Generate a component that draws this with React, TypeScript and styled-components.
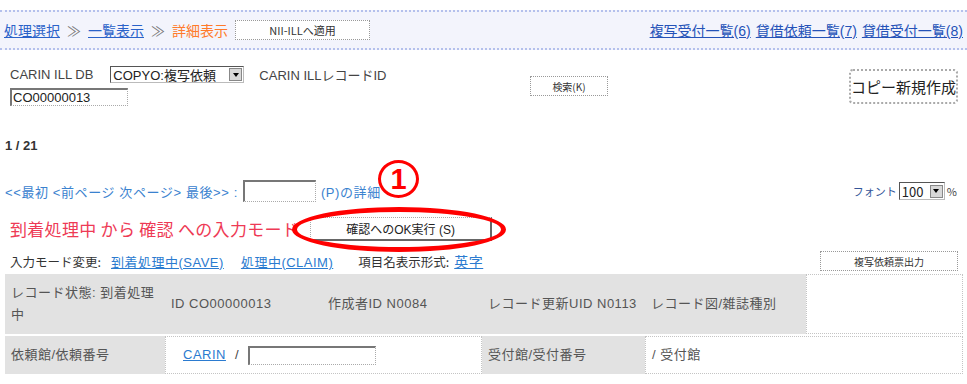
import React from 'react';
import styled, { createGlobalStyle } from 'styled-components';

const GlobalStyle = createGlobalStyle`
  body {
    margin: 0;
    background: #ffffff;
    font-family: "Liberation Sans", "Noto Sans CJK JP", sans-serif;
    color: #333;
  }
`;

const Page = styled.div`
  position: relative;
  width: 967px;
  height: 384px;
  overflow: hidden;
`;

const TopBar = styled.div`
  margin-top: 10px;
  height: 36px;
  display: flex;
  align-items: center;
  justify-content: space-between;
  padding: 0 4px;
  background: #f3f4fc;
  border-top: 2px dotted #b4c0ec;
  border-bottom: 2px dotted #b4c0ec;
  font-size: 14px;
  font-family: "Noto Sans CJK JP", sans-serif;
`;

const Crumbs = styled.div`
  display: flex;
  align-items: center;
`;

const Link = styled.a<{ $tone?: string }>`
  color: ${(p) => p.$tone || '#2a62c9'};
  text-decoration: underline;
  cursor: pointer;
`;

const Sep = styled.span`
  color: #777;
  margin: 0 7px;
`;

const Current = styled.span`
  color: #ff7a2a;
`;

const FlatButton = styled.button<{ $w: number; $h: number; $fs?: number }>`
  width: ${(p) => p.$w}px;
  height: ${(p) => p.$h}px;
  padding: 0;
  background: #fff;
  border: 1px dotted #999;
  font-family: "Noto Sans CJK JP", sans-serif;
  font-size: ${(p) => p.$fs || 11}px;
  color: #333;
`;

const ListLinks = styled.div`
  display: flex;
  gap: 5px;
  font-family: "Liberation Sans", "Noto Sans CJK JP", sans-serif;
`;

const SearchRow = styled.div`
  display: flex;
  align-items: flex-start;
  padding: 15px 9px 0 10px;
  height: 47px;
`;

const SearchLeft = styled.div`
  width: 520px;
  display: flex;
  flex-direction: column;
  gap: 4px;
`;

const Line = styled.div<{ $fs?: number }>`
  display: flex;
  align-items: center;
  font-size: ${(p) => p.$fs || 13}px;
  color: #444;
`;

const Select = styled.div<{ $w: number }>`
  display: inline-flex;
  align-items: center;
  justify-content: space-between;
  width: ${(p) => p.$w}px;
  height: 17px;
  border: 1px solid #555;
  border-right-color: #bbb;
  border-bottom-color: #bbb;
  font-size: 13px;
  color: #222;
  padding-left: 2px;
  box-sizing: border-box;
`;

const Arrow = styled.span`
  width: 13px;
  height: 13px;
  margin-right: 1px;
  background: #d8d8d8;
  border: 1px solid #888;
  box-sizing: border-box;
  display: flex;
  align-items: center;
  justify-content: center;
  &::after {
    content: '';
    border-left: 3px solid transparent;
    border-right: 3px solid transparent;
    border-top: 4px solid #000;
  }
`;

const TextInput = styled.div<{ $w: number; $h: number }>`
  width: ${(p) => p.$w}px;
  height: ${(p) => p.$h}px;
  border-top: 2px solid #777;
  border-left: 2px solid #777;
  border-right: 1px dotted #aaa;
  border-bottom: 1px dotted #aaa;
  font-size: 13px;
  line-height: ${(p) => p.$h - 3}px;
  box-sizing: border-box;
  padding-left: 1px;
  color: #222;
  background: #fff;
`;

const CopyButton = styled.button`
  margin-left: auto;
  margin-top: 4px;
  width: 109px;
  height: 35px;
  background: #fff;
  border: 2px dotted #aaa;
  border-radius: 4px;
  font-family: "Noto Sans CJK JP", sans-serif;
  font-size: 15px;
  color: #222;
  padding: 0;
`;

const Count = styled.div`
  margin: 26px 0 0 5px;
  font-size: 13px;
  font-weight: bold;
  color: #333;
`;

const NavRow = styled.div`
  margin-top: 27px;
  display: flex;
  align-items: center;
  justify-content: space-between;
  padding: 0 10px 0 5px;
  height: 22px;
  font-size: 13px;
`;

const NavText = styled.span`
  color: #3a82cf;
  letter-spacing: 0.6px;
`;

const NavLeft = styled.div`
  display: flex;
  align-items: center;
  gap: 5px;
`;

const FontPick = styled.div`
  display: flex;
  align-items: center;
  gap: 2px;
  color: #335599;
  font-size: 11px;
  font-family: "Noto Sans CJK JP", sans-serif;
`;

const ModeRow = styled.div`
  margin-top: 14px;
  display: flex;
  align-items: center;
  padding-left: 10px;
  height: 25px;
  gap: 11px;
`;

const ModeText = styled.span`
  color: #ee3a55;
  font-size: 17px;
  font-family: "Noto Sans CJK JP", sans-serif;
  letter-spacing: 0.3px;
`;

const OkButton = styled.button`
  width: 182px;
  height: 24px;
  background: #fff;
  border: 1px dotted #aaa;
  border-right: 2px solid #666;
  border-bottom: 2px solid #666;
  font-family: "Liberation Sans", "Noto Sans CJK JP", sans-serif;
  font-size: 12px;
  color: #222;
  padding: 0;
`;

const ChangeRow = styled.div`
  margin-top: 10px;
  display: flex;
  align-items: center;
  padding: 0 9px 0 10px;
  height: 20px;
  font-family: "Noto Sans CJK JP", sans-serif;
  font-size: 12.5px;
  color: #333;
`;

const WideLink = styled(Link)<{ $fs?: number }>`
  font-family: "Liberation Sans", "Noto Sans CJK JP", sans-serif;
  font-size: ${(p) => p.$fs || 13}px;
  letter-spacing: 0.5px;
`;

const Gap = styled.span<{ $w: number }>`
  display: inline-block;
  width: ${(p) => p.$w}px;
`;

const Table = styled.table`
  margin: 1px 0 0 5px;
  width: 958px;
  border-collapse: separate;
  border-spacing: 0 2px;
  table-layout: fixed;
  font-size: 13px;
  color: #555;
`;

const Cell = styled.td<{ $white?: boolean; $h: number }>`
  height: ${(p) => p.$h}px;
  padding: 0 6px;
  background: ${(p) => (p.$white ? '#fff' : '#e2e2e2')};
  border: ${(p) => (p.$white ? '1px dotted #c4c4c4' : 'none')};
  vertical-align: middle;
  line-height: 22px;
  letter-spacing: 0.5px;
`;

const CircleNum = styled.div`
  position: absolute;
  left: 378px;
  top: 160px;
  width: 35px;
  height: 32px;
  border: 3px solid #f00;
  border-radius: 50%;
  display: flex;
  align-items: center;
  justify-content: center;
  color: #f00;
  font-family: "Liberation Sans", sans-serif;
  font-weight: bold;
  font-size: 29px;
`;

const Ellipse = styled.div`
  position: absolute;
  left: 292px;
  top: 207px;
  width: 204px;
  height: 35px;
  border: 5px solid #f00;
  border-radius: 50%;
  pointer-events: none;
`;

export default function App() {
  return (
    <Page>
      <GlobalStyle />
      <TopBar>
        <Crumbs>
          <Link>処理選択</Link>
          <Sep>≫</Sep>
          <Link>一覧表示</Link>
          <Sep>≫</Sep>
          <Current>詳細表示</Current>
          <Gap $w={7} />
          <FlatButton $w={135} $h={20}>NII-ILLへ適用</FlatButton>
        </Crumbs>
        <ListLinks>
          <Link $tone="#2452b8">複写受付一覧(6)</Link>
          <Link $tone="#2452b8">貸借依頼一覧(7)</Link>
          <Link $tone="#2452b8">貸借受付一覧(8)</Link>
        </ListLinks>
      </TopBar>

      <SearchRow>
        <SearchLeft>
          <Line>
            CARIN ILL DB
            <Gap $w={17} />
            <Select $w={134}>
              COPYO:複写依頼
              <Arrow />
            </Select>
            <Gap $w={15} />
            CARIN ILLレコードID
          </Line>
          <TextInput $w={118} $h={18}>CO00000013</TextInput>
        </SearchLeft>
        <FlatButton $w={78} $h={20} $fs={10} style={{ marginTop: 11 }}>
          検索(K)
        </FlatButton>
        <CopyButton>コピー新規作成</CopyButton>
      </SearchRow>

      <Count>1 / 21</Count>

      <NavRow>
        <NavLeft>
          <NavText>&lt;&lt;最初 &lt;前ページ 次ページ&gt; 最後&gt;&gt; :</NavText>
          <TextInput $w={73} $h={22} />
          <NavText>(P)の詳細</NavText>
        </NavLeft>
        <FontPick>
          フォント
          <Select $w={46} style={{ height: 18 }}>
            100
            <Arrow />
          </Select>
          <span style={{ color: '#444' }}>%</span>
        </FontPick>
      </NavRow>

      <ModeRow>
        <ModeText>到着処理中 から 確認 への入力モード</ModeText>
        <OkButton>確認へのOK実行 (S)</OkButton>
      </ModeRow>

      <ChangeRow>
        入力モード変更:
        <Gap $w={10} />
        <WideLink $tone="#2b7bd0">到着処理中(SAVE)</WideLink>
        <Gap $w={17} />
        <WideLink $tone="#2b7bd0">処理中(CLAIM)</WideLink>
        <Gap $w={25} />
        項目名表示形式:
        <Gap $w={5} />
        <WideLink $tone="#2b7bd0" $fs={14}>英字</WideLink>
        <FlatButton $w={138} $h={20} $fs={10} style={{ marginLeft: 'auto' }}>
          複写依頼票出力
        </FlatButton>
      </ChangeRow>

      <Table>
        <colgroup>
          <col style={{ width: 160 }} />
          <col style={{ width: 157 }} />
          <col style={{ width: 160 }} />
          <col style={{ width: 163 }} />
          <col style={{ width: 161 }} />
          <col style={{ width: 157 }} />
        </colgroup>
        <tbody>
          <tr>
            <Cell $h={58}>レコード状態: 到着処理中</Cell>
            <Cell $h={58}>ID CO00000013</Cell>
            <Cell $h={58}>作成者ID N0084</Cell>
            <Cell $h={58}>レコード更新UID N0113</Cell>
            <Cell $h={58}>レコード図/雑誌種別</Cell>
            <Cell $h={58} $white />
          </tr>
          <tr>
            <Cell $h={36}>依頼館/依頼番号</Cell>
            <Cell $h={36} $white colSpan={2} style={{ paddingLeft: 17 }}>
              <Line>
                <Link $tone="#2b7bd0">CARIN</Link>
                <Gap $w={9} />/<Gap $w={9} />
                <TextInput $w={128} $h={19} />
              </Line>
            </Cell>
            <Cell $h={36}>受付館/受付番号</Cell>
            <Cell $h={36} $white colSpan={2}>/ 受付館</Cell>
          </tr>
        </tbody>
      </Table>

      <CircleNum>1</CircleNum>
      <Ellipse />
    </Page>
  );
}
